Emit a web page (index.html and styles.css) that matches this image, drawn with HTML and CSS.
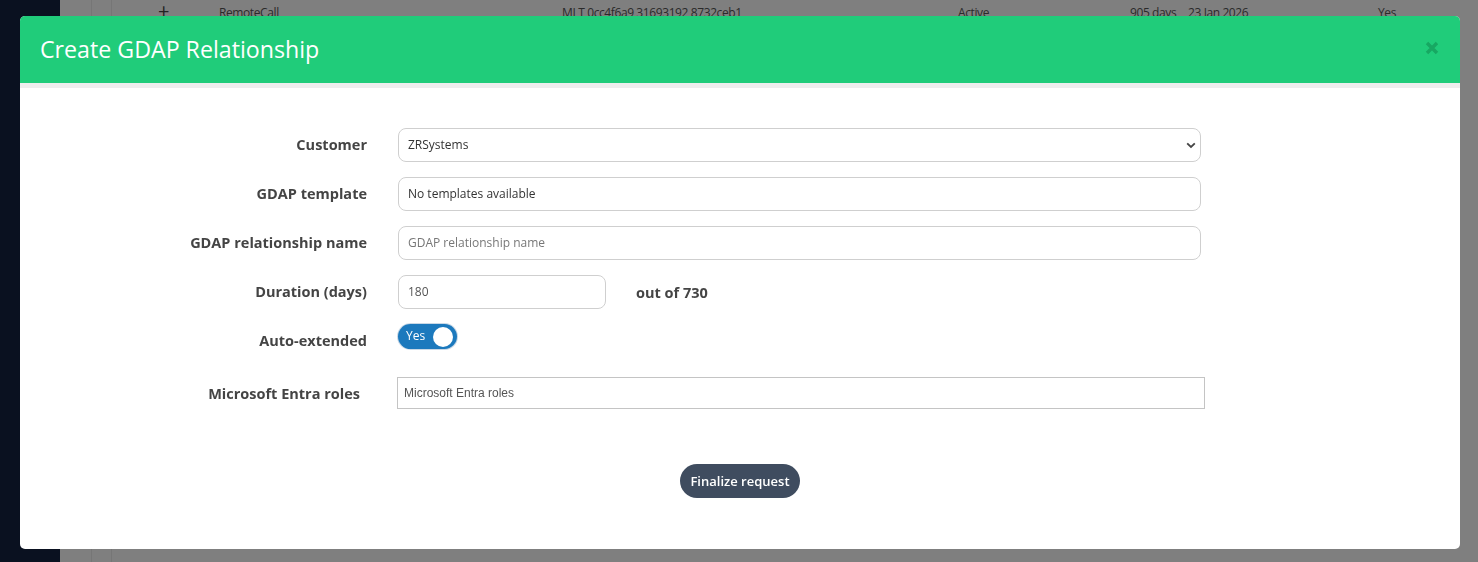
FILE: index.html
```html
<!DOCTYPE html>
<html lang="en">
<head>
    <meta charset="UTF-8">
    <meta name="viewport" content="width=device-width, initial-scale=1.0">
    <title>Create GDAP Relationship</title>
    <link rel="stylesheet" href="styles.css">
</head>
<body>
    <div id="page">
        <div class="sidebar"></div>
        <div class="main">
            <div class="col_a"></div>
            <div class="col_b"></div>
            <div class="row">
                <span class="c1">+</span>
                <span class="c2">RemoteCall</span>
                <span class="c3">MLT 0cc4f6a9 31693192 8732ceb1</span>
                <span class="c4">Active</span>
                <span class="c5">905 days</span>
                <span class="c6">23 Jan 2026</span>
                <span class="c7">Yes</span>
            </div>
        </div>
    </div>

    <div class="overlay">
        <div class="modal">
            <div class="modal_head">
                <h2>Create GDAP Relationship</h2>
                <svg class="close" width="14" height="14" viewBox="0 0 14 14"><path d="M2 2 L12 12 M12 2 L2 12" stroke="#17a862" stroke-width="3.4"/></svg>
            </div>
            <div class="modal_body">
                <div class="form">
                    <label>Customer</label>
                    <div class="select_box">
                        <div class="field">ZRSystems</div>
                        <svg class="chev" width="10" height="7" viewBox="0 0 10 7"><path d="M1.2 1.3 L5 5 L8.8 1.3" fill="none" stroke="#444" stroke-width="1.8"/></svg>
                    </div>

                    <label>GDAP template</label>
                    <div class="field">No templates available</div>

                    <label>GDAP relationship name</label>
                    <div class="field ph">GDAP relationship name</div>

                    <label>Duration (days)</label>
                    <div class="dur">
                        <div class="field short">180</div>
                        <span class="outof">out of 730</span>
                    </div>

                    <label>Auto-extended</label>
                    <div>
                        <div class="toggle"><span>Yes</span><i></i></div>
                    </div>
                </div>

                <div class="roles">
                    <label>Microsoft Entra roles</label>
                    <div class="roles_input">Microsoft Entra roles</div>
                </div>

                <div class="btn_set">
                    <a class="btn">Finalize request</a>
                </div>
            </div>
        </div>
    </div>
</body>
</html>
```

FILE: styles.css
```css
* { margin:0; padding:0; box-sizing: border-box;}
body {font-family: "Open Sans", "Liberation Sans", sans-serif; background-color: #fff; width: 1478px; height: 562px; overflow: hidden;}

#page {display: flex; height: 562px;}
#page .sidebar {width: 60px; background-color: #152240;}
#page .main {flex: 1; position: relative; background-color: #fff;}
#page .main .col_a {position: absolute; left: 31px; top: 0; bottom: 0; border-left: 1px solid #ececec;}
#page .main .col_b {position: absolute; left: 51px; top: 0; bottom: 0; border-left: 1px solid #ececec;}
#page .row {display: flex; padding-left: 98px; padding-top: 1px; font-size: 12px; color: #555; line-height: 24px; letter-spacing: -0.4px;}
#page .row .c1 {width: 61px; font-size: 20px; color: #444; line-height: 20px;}
#page .row .c2 {width: 343px;}
#page .row .c3 {width: 396px;}
#page .row .c4 {width: 172px;}
#page .row .c5 {width: 58px;}
#page .row .c6 {width: 190px;}

.overlay {position: fixed; left: 0; top: 0; right: 0; bottom: 0; background-color: rgba(0,0,0,0.5);
          padding: 16px 18px 13px 20px;}
.modal {height: 100%; background-color: #fff; border-radius: 5px; overflow: hidden;}

.modal_head {height: 67px; background-color: #20cc7a; display: flex; align-items: center; justify-content: space-between;
             padding: 0 21px 0 20px; border-bottom: 5px solid #eeeeee; box-sizing: content-box;}
.modal_head h2 {font-size: 23.2px; font-weight: 400; color: #fff; margin-top: -2px;}
.modal_head .close {margin-top: -3px;}

.modal_body {padding-top: 40px;}

.form {display: grid; grid-template-columns: 347px 803px; column-gap: 31px; row-gap: 15px;}
.form label {font-size: 14.5px; font-weight: 700; color: #444; text-align: right; line-height: 34px;}
.field {height: 34px; border: 1px solid #cfcfcf; border-radius: 8px; padding: 0 9px;
        font-size: 12px; color: #333; line-height: 32px;}
.field.ph {color: #777;}
.select_box {position: relative;}
.select_box .chev {position: absolute; right: 5px; top: 14px;}
.dur {display: flex; align-items: center;}
.dur .short {width: 208px; color: #555;}
.dur .outof {margin-left: 30px; font-size: 14.5px; font-weight: 700; color: #444;}

.toggle {width: 59px; height: 25px; border-radius: 13px; background-color: #1c79bd; display: flex; align-items: center;
         justify-content: space-between; padding: 0 4px 0 8px; box-shadow: 0 0 0 1px #c9d8e6;}
.toggle span {font-size: 12px; color: #fff; margin-top: -2px;}
.toggle i {width: 20px; height: 20px; border-radius: 50%; background-color: #fff;}

.roles {display: flex; align-items: center; margin-top: 19px;}
.roles label {width: 340px; text-align: right; font-size: 14.5px; font-weight: 700; color: #444;}
.roles_input {margin-left: 37px; width: 808px; height: 32px; border: 1px solid #c4c4c4; padding: 0 6px;
              font-family: "Liberation Sans", Arial, sans-serif; font-size: 12px; color: #555; line-height: 30px;}

.btn_set {display: flex; justify-content: center; margin-top: 55px;}
.btn {display: block; width: 120px; height: 34px; border-radius: 17px; background-color: #3f4c5f; color: #fff;
      font-size: 13px; font-weight: 600; text-align: center; line-height: 34px;}
```
